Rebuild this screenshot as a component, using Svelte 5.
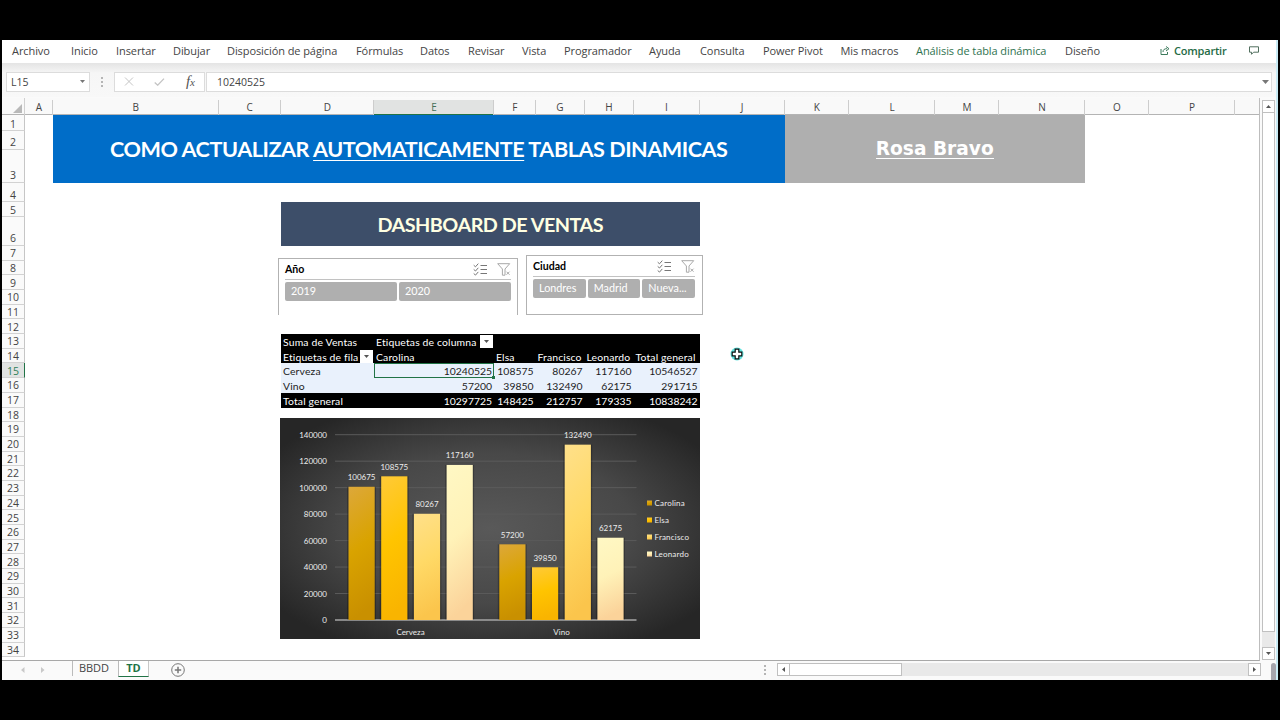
<script lang="ts">
  type Cell = { row: number; col: number; text: string; num?: boolean; filter?: boolean };

  const menu = [
    { label: 'Archivo', w: 59 },
    { label: 'Inicio', w: 45 },
    { label: 'Insertar', w: 57 },
    { label: 'Dibujar', w: 54 },
    { label: 'Disposición de página', w: 129 },
    { label: 'Fórmulas', w: 64 },
    { label: 'Datos', w: 48 },
    { label: 'Revisar', w: 54 },
    { label: 'Vista', w: 42 },
    { label: 'Programador', w: 85 },
    { label: 'Ayuda', w: 51 },
    { label: 'Consulta', w: 63 },
    { label: 'Power Pivot', w: 77.5 },
    { label: 'Mis macros', w: 75.5 },
    { label: 'Análisis de tabla dinámica', w: 149, green: true },
    { label: 'Diseño', w: 60 }
  ];

  const columns = [
    { name: 'A', w: 28 },
    { name: 'B', w: 165.5 },
    { name: 'C', w: 62.5 },
    { name: 'D', w: 93 },
    { name: 'E', w: 120 },
    { name: 'F', w: 41.5 },
    { name: 'G', w: 49 },
    { name: 'H', w: 49 },
    { name: 'I', w: 66 },
    { name: 'J', w: 85 },
    { name: 'K', w: 64.5 },
    { name: 'L', w: 86 },
    { name: 'M', w: 64 },
    { name: 'N', w: 86 },
    { name: 'O', w: 64 },
    { name: 'P', w: 86 },
    { name: '', w: 25 }
  ];

  const rowHeights = [16, 18.7, 33, 19.8, 15, 28.5, 14.7];
  while (rowHeights.length < 34) rowHeights.push(14.7);

  const colTemplate = '23px ' + columns.map((c) => c.w + 'px').join(' ');
  const rowTemplate = rowHeights.map((h) => h + 'px').join(' ');

  const pivot: Cell[] = [
    { row: 13, col: 5, text: 'Suma de Ventas' },
    { row: 13, col: 6, text: 'Etiquetas de columna', filter: true },
    { row: 14, col: 5, text: 'Etiquetas de fila', filter: true },
    { row: 14, col: 6, text: 'Carolina' },
    { row: 14, col: 7, text: 'Elsa' },
    { row: 14, col: 8, text: 'Francisco' },
    { row: 14, col: 9, text: 'Leonardo' },
    { row: 14, col: 10, text: 'Total general' }
  ];

  const body = [
    ['Cerveza', '10240525', '108575', '80267', '117160', '10546527'],
    ['Vino', '57200', '39850', '132490', '62175', '291715'],
    ['Total general', '10297725', '148425', '212757', '179335', '10838242']
  ];
  body.forEach((line, r) => {
    line.forEach((text, c) => pivot.push({ row: 15 + r, col: 5 + c, text, num: c > 0 }));
  });

  const slicers = [
    { id: 'year', title: 'Año', items: ['2019', '2020'] },
    { id: 'city', title: 'Ciudad', items: ['Londres', 'Madrid', 'Nueva...'] }
  ];

  const ticks = [0, 20000, 40000, 60000, 80000, 100000, 120000, 140000];
  const series = ['Carolina', 'Elsa', 'Francisco', 'Leonardo'];
  const groups = [
    { name: 'Cerveza', x: 68.5, label: 130.5, values: [100675, 108575, 80267, 117160] },
    { name: 'Vino', x: 219.3, label: 281.5, values: [57200, 39850, 132490, 62175] }
  ];
  const gradients = [
    ['#dda83a', '#d9a300', '#c99000'],
    ['#ffca38', '#ffc400', '#f9b400'],
    ['#ffe08a', '#ffd966', '#fbc54c'],
    ['#fff8c4', '#fff2b8', '#fbd39a']
  ];

  const yOf = (v: number) => 202 - (v / 140000) * 185.3;
</script>

<div class="screen">
  <div class="window">
    <nav class="ribbon">
      {#each menu as item}
        <span class="tab" class:green={item.green} style="width: {item.w}px">{item.label}</span>
      {/each}
      <span class="share">
        <svg width="10" height="9" viewBox="0 0 10 9" fill="none" stroke="#3d7a5c" stroke-width="1">
          <path d="M1 3v5.5h6.5V6" />
          <path d="M3 6C3 3.5 4.5 2.7 7 2.7M6 .5l3 2.2-3 2.3" />
        </svg>
        Compartir
      </span>
      <span class="comment">
        <svg width="10" height="9" viewBox="0 0 10 9" fill="none" stroke="#52705f" stroke-width="1">
          <path d="M.5.8h9v5.4H4.6L2.5 8.3V6.2h-2z" />
        </svg>
      </span>
    </nav>

    <div class="formula-bar">
      <div class="name-box">
        L15
        <svg width="5" height="3" viewBox="0 0 5 3"><path d="M0 0h5L2.5 3z" fill="#777" /></svg>
      </div>
      <div class="dots"><i></i><i></i><i></i></div>
      <div class="fx-box">
        <svg width="10" height="9" viewBox="0 0 10 9" stroke="#c4c4c4" fill="none"><path d="M1 .5l8 8M9 .5l-8 8" /></svg>
        <svg width="11" height="8" viewBox="0 0 11 8" stroke="#c4c4c4" fill="none" stroke-width="1.3"><path d="M.7 4.5l3 2.7L10 .6" /></svg>
        <em>f<small>x</small></em>
      </div>
      <div class="formula">
        10240525
        <svg width="7" height="4" viewBox="0 0 7 4"><path d="M0 0h7L3.5 4z" fill="#777" /></svg>
      </div>
    </div>

    <div class="main">
      <div class="sheet">
        <div class="col-heads" style="grid-template-columns: {colTemplate}">
          <div class="corner">
            <svg width="9" height="9" viewBox="0 0 9 9"><path d="M9 0v9H0z" fill="#b9b9b9" /></svg>
          </div>
          {#each columns as col}
            <div class="col-head" class:active={col.name === 'E'}>{col.name}</div>
          {/each}
        </div>

        <div class="cells" style="grid-template-columns: {colTemplate}; grid-template-rows: {rowTemplate}">
          {#each rowHeights as _, i}
            <div class="row-head" class:active={i === 14} style="grid-row: {i + 1}">{i + 1}</div>
          {/each}

          <h1 class="title"><span>COMO ACTUALIZAR <u>AUTOMATICAMENTE</u> TABLAS DINAMICAS</span></h1>
          <div class="author"><span>Rosa Bravo</span></div>
          <h2 class="dash-title">DASHBOARD DE VENTAS</h2>

          <div class="pivot-dark head"></div>
          <div class="pivot-light"></div>
          <div class="pivot-dark foot"></div>
          {#each pivot as cell}
            <div
              class="cell"
              class:num={cell.num}
              class:dark={cell.row < 15 || cell.row === 17}
              class:selected={cell.row === 15 && cell.col === 6}
              style="grid-row: {cell.row}; grid-column: {cell.col}"
            >
              <span>{cell.text}</span>
              {#if cell.filter}
                <b class="drop" class:near={cell.row === 13}>
                  <svg width="5" height="3" viewBox="0 0 5 3"><path d="M0 0h5L2.5 3z" fill="#555" /></svg>
                </b>
              {/if}
            </div>
          {/each}
        </div>

        {#each slicers as slicer}
          <section class="slicer {slicer.id}">
            <header>
              <strong>{slicer.title}</strong>
              <svg class="multi" width="14" height="13" viewBox="0 0 14 13" fill="none" stroke="#777" stroke-width="1">
                <path d="M.7 2.2l1.8 1.6L5.3.6M.7 6.4L2.5 8l2.8-3.2M.7 10.5l1.8 1.6 2.8-3.2M7.5 2.5H14M7.5 6.5H14M7.5 10.5H14" />
              </svg>
              <svg width="14" height="13" viewBox="0 0 14 13" fill="none" stroke="#a8a8a8" stroke-width="1">
                <path d="M.7.7h12L8 6v6.2H5.4V6zM9.5 8.7l3 3M12.5 8.7l-3 3" />
              </svg>
            </header>
            <div class="buttons">
              {#each slicer.items as item}
                <span>{item}</span>
              {/each}
            </div>
          </section>
        {/each}

        <svg class="chart" width="420" height="221" viewBox="0 0 420 221">
          <defs>
            <radialGradient id="bg" cx="0.5" cy="0.5" r="0.62">
              <stop offset="0" stop-color="#595959" />
              <stop offset="0.55" stop-color="#484848" />
              <stop offset="1" stop-color="#262626" />
            </radialGradient>
            {#each gradients as g, i}
              <linearGradient id="s{i}" x1="0" y1="0" x2="0.15" y2="1">
                <stop offset="0" stop-color={g[0]} />
                <stop offset="0.5" stop-color={g[1]} />
                <stop offset="1" stop-color={g[2]} />
              </linearGradient>
            {/each}
          </defs>
          <rect width="420" height="221" fill="url(#bg)" />
          {#each ticks as t}
            <line x1="55" x2="356.5" y1={yOf(t)} y2={yOf(t)} stroke={t ? '#5b5b5b' : '#a6a6a6'} stroke-width={t ? 1 : 1.6} />
            <text x="47" y={yOf(t) + 3} text-anchor="end">{t}</text>
          {/each}
          {#each groups as g}
            {#each g.values as v, i}
              <rect class="shade" x={g.x + i * 32.7 - 1.5} y={yOf(v)} width="29" height={201.5 - yOf(v)} />
              <rect x={g.x + i * 32.7} y={yOf(v)} width="26.2" height={202 - yOf(v)} fill="url(#s{i})" />
              <text x={g.x + i * 32.7 + 13.1} y={yOf(v) - 6.5} text-anchor="middle">{v}</text>
            {/each}
            <text x={g.label} y="216.5" text-anchor="middle">{g.name}</text>
          {/each}
          {#each series as s, i}
            <rect x="367" y={82.5 + i * 17} width="5" height="5" fill="url(#s{i})" />
            <text class="key" x="374.5" y={88 + i * 17}>{s}</text>
          {/each}
        </svg>

        <svg class="pointer" width="14" height="14" viewBox="0 0 14 14">
          <circle cx="7" cy="7" r="6.5" fill="#5fe3df" />
          <path d="M5.2 2.2h3.6v3h3v3.6h-3v3H5.2v-3h-3V5.2h3z" fill="#fff" stroke="#111" stroke-width="1.2" />
        </svg>
      </div>

      <div class="vscroll">
        <b><svg width="5" height="3" viewBox="0 0 5 3"><path d="M0 3h5L2.5 0z" fill="#555" /></svg></b>
        <i></i>
        <b><svg width="5" height="3" viewBox="0 0 5 3"><path d="M0 0h5L2.5 3z" fill="#555" /></svg></b>
      </div>
    </div>

    <footer class="bottom">
      <svg class="arrows" width="24" height="6" viewBox="0 0 24 6" fill="#c9c9c9"><path d="M3.5 0v6L0 3zM20 0v6l3.5-3z" /></svg>
      <span class="sheet-tab">BBDD</span>
      <span class="sheet-tab current">TD</span>
      <svg class="add" width="14" height="14" viewBox="0 0 14 14" fill="none" stroke="#777">
        <circle cx="7" cy="7" r="6.3" />
        <path d="M7 3.8v6.4M3.8 7h6.4" stroke-width="1.5" />
      </svg>
      <div class="dots"><i></i><i></i><i></i></div>
      <div class="hscroll">
        <b><svg width="3" height="5" viewBox="0 0 3 5"><path d="M3 0v5L0 2.5z" fill="#555" /></svg></b>
        <i></i>
        <b><svg width="3" height="5" viewBox="0 0 3 5"><path d="M0 0v5l3-2.5z" fill="#555" /></svg></b>
      </div>
      <div class="grip"></div>
    </footer>
  </div>
</div>

<style>
  :global(body) {
    background: #000;
    overflow: hidden;
  }

  .screen {
    box-sizing: border-box;
    width: 1280px;
    height: 720px;
    padding: 40px 2px;
    background: #000;
    font-family: 'Open Sans', 'Noto Sans', sans-serif;
    color: #444;
  }

  .window {
    box-sizing: border-box;
    height: 640px;
    display: flex;
    flex-direction: column;
    background: #fafafa;
    border-right: 2px solid #c9ebf5;
    overflow: hidden;
  }

  .ribbon {
    height: 23px;
    box-sizing: border-box;
    display: flex;
    align-items: center;
    padding: 0 0 2px 10px;
    background: #fff;
    font-size: 11px;
    letter-spacing: -0.08px;
    white-space: nowrap;
  }

  .tab {
    flex: none;
  }

  .green {
    color: #2f7350;
  }

  .share {
    display: flex;
    align-items: center;
    gap: 4px;
    margin-left: 35px;
    color: #1f6b45;
    font-weight: 600;
    letter-spacing: -0.2px;
  }

  .comment {
    display: flex;
    margin-left: 22px;
  }

  .formula-bar {
    height: 35px;
    box-sizing: border-box;
    display: flex;
    align-items: flex-start;
    padding: 9px 4px 0;
    background: linear-gradient(#e4e4e4, #f6f6f6 10px, #f8f8f8);
    font-size: 10.5px;
  }

  .name-box,
  .fx-box,
  .formula {
    height: 20px;
    box-sizing: border-box;
    display: flex;
    align-items: center;
    background: #fff;
    border: 1px solid #dcdcdc;
  }

  .name-box {
    width: 84px;
    justify-content: space-between;
    padding: 0 4px;
  }

  .dots {
    display: flex;
    flex-direction: column;
    gap: 2px;
  }

  .dots i {
    width: 2px;
    height: 2px;
    background: #b5b5b5;
  }

  .formula-bar .dots {
    margin: 5px 11px 0;
  }

  .fx-box {
    width: 91px;
    padding: 0 9px;
    justify-content: space-between;
  }

  .fx-box em {
    font: italic 15px 'Liberation Serif', serif;
    color: #555;
  }

  .fx-box small {
    font-size: 11px;
  }

  .formula {
    flex: 1;
    margin-left: 1px;
    padding: 0 2px 0 10px;
    justify-content: space-between;
  }

  .main {
    height: 563px;
    display: flex;
  }

  .sheet {
    position: relative;
    width: 1258px;
    box-sizing: border-box;
    border-right: 1px solid #bdbdbd;
    border-bottom: 1px solid #a8a8a8;
    overflow: hidden;
  }

  .col-heads {
    display: grid;
    height: 17px;
    box-sizing: border-box;
    border-bottom: 1px solid #b4b4b4;
    background: #f9f9f9;
  }

  .corner {
    display: flex;
    align-items: flex-end;
    justify-content: flex-end;
    padding: 0 2px 2px 0;
    border-right: 1px solid #d0d0d0;
  }

  .col-head {
    margin-top: 2px;
    border-right: 1px solid #cdcdcd;
    font-size: 10px;
    line-height: 15px;
    text-indent: 1px;
    text-align: center;
  }

  .col-head.active {
    background: #e1e3e2;
    color: #44705a;
    box-shadow: inset 0 -1px #217346;
  }

  .cells {
    display: grid;
    height: 545px;
    background: #fff;
  }

  .row-head {
    grid-column: 1;
    display: flex;
    align-items: flex-end;
    justify-content: center;
    border-right: 1px solid #c6c6c6;
    border-bottom: 1px solid #d2d2d2;
    background: #fafafa;
    font-size: 10.5px;
    line-height: 11.5px;
  }

  .row-head.active {
    background: #e1e3e2;
    color: #2f8058;
    border-right-color: #217346;
  }

  .title,
  .author,
  .dash-title {
    margin: 0;
    display: flex;
    align-items: center;
    justify-content: center;
    white-space: nowrap;
  }

  .title {
    grid-area: 1 / 3 / 4 / 12;
    background: #006dc8;
    color: #fff;
    font: 700 21.6px Lato, sans-serif;
    letter-spacing: -0.45px;
  }

  .title u {
    text-decoration-thickness: 1px;
    text-underline-offset: 3px;
  }

  .author {
    grid-area: 1 / 12 / 4 / 16;
    background: #afafaf;
    color: #fff;
    font: 700 18.6px 'DejaVu Sans', sans-serif;
  }

  .author span {
    border-bottom: 1.5px solid #fff;
    line-height: 19px;
  }

  .dash-title {
    grid-area: 5 / 5 / 7 / 11;
    background: #3d4e69;
    color: #ffffe2;
    font: 700 19.8px Lato, sans-serif;
    letter-spacing: -0.5px;
  }

  .pivot-dark,
  .pivot-light {
    grid-column: 5 / 11;
    background: #000;
  }

  .pivot-dark.head {
    grid-row: 13 / 15;
  }

  .pivot-light {
    grid-row: 15 / 17;
    background: #e9f1fc;
  }

  .pivot-dark.foot {
    grid-row: 17;
  }

  .cell {
    position: relative;
    display: flex;
    align-items: center;
    padding: 1px 2px 0;
    color: #1c1c1c;
    font: 10.4px/12px Lato, sans-serif;
    letter-spacing: 0.15px;
    white-space: nowrap;
  }

  .cell.dark {
    color: #fff;
  }

  .cell.num {
    justify-content: flex-end;
    letter-spacing: 0;
  }

  .cell.selected {
    outline: 1px solid #217346;
    outline-offset: -1px;
  }

  .cell.selected::after {
    content: '';
    position: absolute;
    right: -1px;
    bottom: -1px;
    width: 3px;
    height: 3px;
    background: #217346;
  }

  .drop {
    position: absolute;
    top: 1px;
    right: 1px;
    width: 13px;
    height: 13px;
    display: flex;
    align-items: center;
    justify-content: center;
    background: #fff;
  }

  .drop.near {
    right: 1px;
  }

  .slicer {
    position: absolute;
    box-sizing: border-box;
    border: 1px solid #b2b2b2;
    background: #fff;
    color: #000;
    font-family: Lato, sans-serif;
  }

  .slicer.year {
    left: 276px;
    top: 160px;
    width: 240px;
    height: 57px;
    padding: 0 6px;
    border-bottom: 0;
  }

  .slicer.city {
    left: 524px;
    top: 157px;
    width: 177px;
    height: 60px;
    padding: 0 7px 0 6px;
  }

  .slicer header {
    height: 20px;
    display: flex;
    align-items: center;
    border-bottom: 1px solid #c2c2c2;
    font-size: 10.6px;
  }

  .slicer .multi {
    margin: 0 10px 0 auto;
  }

  .buttons {
    display: flex;
    gap: 2px;
    margin-top: 2px;
  }

  .buttons span {
    flex: 1 1 0;
    height: 19px;
    box-sizing: border-box;
    padding-left: 6px;
    border-radius: 2px;
    background: #afafaf;
    color: #fff;
    font-size: 10.8px;
    line-height: 18px;
  }

  .chart {
    position: absolute;
    left: 278px;
    top: 320px;
  }

  .chart text {
    font: 8px Lato, sans-serif;
    fill: #ececec;
  }

  .chart .key {
    letter-spacing: 0.2px;
  }

  .shade {
    fill: #000;
    opacity: 0.25;
  }

  .pointer {
    position: absolute;
    left: 728px;
    top: 249px;
  }

  .vscroll {
    width: 13px;
    height: 560px;
    margin: 2px 0 0 2px;
    display: flex;
    flex-direction: column;
    background: #e9e9e9;
  }

  .vscroll b,
  .hscroll b {
    flex: none;
    width: 13px;
    height: 13px;
    box-sizing: border-box;
    display: flex;
    align-items: center;
    justify-content: center;
    border: 1px solid #c0c0c0;
    background: #fff;
  }

  .vscroll i {
    height: 519px;
    box-sizing: border-box;
    margin-bottom: auto;
    border: 1px solid #c0c0c0;
    border-top: 0;
    background: #fff;
  }

  .main {
    margin-top: 1px;
  }

  .bottom {
    flex: 1;
    display: flex;
    align-items: flex-start;
    font-size: 11px;
    line-height: 13px;
  }

  .arrows {
    margin: 6px 27px 0 19px;
  }

  .sheet-tab {
    box-sizing: border-box;
    width: 46px;
    height: 15px;
    padding-right: 3px;
    text-align: center;
    border-left: 1px solid #bbb;
  }

  .sheet-tab.current {
    width: 31px;
    height: 17px;
    margin-top: -1px;
    padding: 0;
    border-right: 1px solid #c8c8c8;
    border-bottom: 1.5px solid #217346;
    background: #fff;
    color: #217346;
    font-weight: 700;
    line-height: 15px;
  }

  .add {
    margin: 2px 0 0 22px;
  }

  .bottom .dots {
    margin: 4px 11px 0 auto;
  }

  .hscroll {
    width: 484px;
    height: 13px;
    margin-top: 2px;
    display: flex;
    background: #e9e9e9;
  }

  .hscroll i {
    width: 112px;
    box-sizing: border-box;
    margin-right: auto;
    border: 1px solid #c0c0c0;
    border-left: 0;
    background: #fff;
  }

  .grip {
    width: 5px;
    height: 17px;
    margin: 2px 0 0 10px;
    border-radius: 3px 3px 0 0;
    background: #a5a5ad;
  }
</style>
